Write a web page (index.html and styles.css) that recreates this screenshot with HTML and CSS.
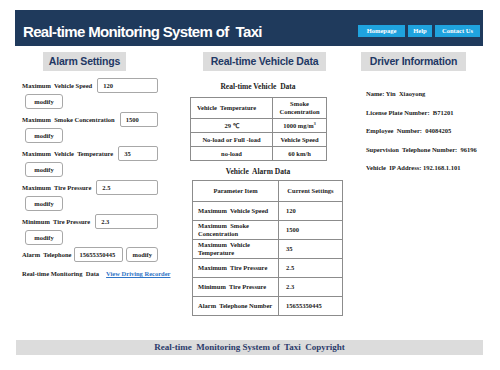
FILE: index.html
```html
<!DOCTYPE html>
<html lang="en">
<head>
<meta charset="utf-8">
<title>Real-time Monitoring System of Taxi</title>
<link rel="stylesheet" href="styles.css">
</head>
<body>
<div class="page">
  <header class="header">
    <h1 class="title">Real-time Monitoring System of&nbsp; Taxi</h1>
    <nav class="nav">
      <a class="nav-btn nav-home" href="#">Homepage</a>
      <a class="nav-btn nav-help" href="#">Help</a>
      <a class="nav-btn nav-contact" href="#">Contact Us</a>
    </nav>
  </header>

  <main class="main">
    <section class="col col-alarm">
      <h2 class="sec-title">Alarm Settings</h2>
      <div class="forms">
        <div class="group">
          <div class="row"><span class="lbl">Maximum&nbsp; Vehicle Speed</span><input class="inp" type="text" value="120"></div>
          <button class="btn">modify</button>
        </div>
        <div class="group">
          <div class="row"><span class="lbl">Maximum&nbsp; Smoke Concentration</span><input class="inp" type="text" value="1500"></div>
          <button class="btn">modify</button>
        </div>
        <div class="group">
          <div class="row"><span class="lbl">Maximum&nbsp; Vehicle&nbsp; Temperature</span><input class="inp" type="text" value="35"></div>
          <button class="btn">modify</button>
        </div>
        <div class="group">
          <div class="row"><span class="lbl">Maximum&nbsp; Tire Pressure</span><input class="inp" type="text" value="2.5"></div>
          <button class="btn">modify</button>
        </div>
        <div class="group">
          <div class="row"><span class="lbl">Minimum&nbsp; Tire Pressure</span><input class="inp" type="text" value="2.3"></div>
          <button class="btn">modify</button>
        </div>
        <div class="row row-phone"><span class="lbl">Alarm&nbsp; Telephone</span><input class="inp inp-phone" type="text" value="15655350445"><button class="btn btn-inline">modify</button></div>
        <div class="row row-link"><span class="lbl">Real-time Monitoring&nbsp; Data</span><a class="link" href="#">View Driving Recorder</a></div>
      </div>
    </section>

    <section class="col col-data">
      <h2 class="sec-title">Real-time Vehicle Data</h2>
      <p class="caption caption-1">Real-time Vehicle&nbsp; Data</p>
      <table class="tbl tbl-1">
        <colgroup><col class="c1a"><col class="c1b"></colgroup>
        <tr class="r-head"><td>Vehicle&nbsp; Temperature</td><td>Smoke<br>Concentration</td></tr>
        <tr><td>29 ℃</td><td>1000 mg/m<sup>3</sup></td></tr>
        <tr><td>No-load or Full -load</td><td>Vehicle Speed</td></tr>
        <tr><td>no-load</td><td>60 km/h</td></tr>
      </table>
      <p class="caption caption-2">Vehicle&nbsp; Alarm Data</p>
      <table class="tbl tbl-2">
        <colgroup><col class="c2a"><col class="c2b"></colgroup>
        <tr class="r-head"><th>Parameter Item</th><th>Current Settings</th></tr>
        <tr><td>Maximum&nbsp; Vehicle Speed</td><td>120</td></tr>
        <tr><td>Maximum&nbsp; Smoke<br>Concentration</td><td>1500</td></tr>
        <tr><td>Maximum&nbsp; Vehicle<br>Temperature</td><td>35</td></tr>
        <tr><td>Maximum&nbsp; Tire Pressure</td><td>2.5</td></tr>
        <tr><td>Minimum&nbsp; Tire Pressure</td><td>2.3</td></tr>
        <tr><td>Alarm&nbsp; Telephone Number</td><td>15655350445</td></tr>
      </table>
    </section>

    <section class="col col-driver">
      <h2 class="sec-title">Driver Information</h2>
      <ul class="info">
        <li>Name: Yin&nbsp; Xiaoyong</li>
        <li>License Plate Number:&nbsp; B71201</li>
        <li>Employee&nbsp; Number:&nbsp; 04084205</li>
        <li>Supervision&nbsp; Telephone Number:&nbsp; 96196</li>
        <li>Vehicle&nbsp; IP Address: 192.168.1.101</li>
      </ul>
    </section>
  </main>

  <footer class="footer">Real-time&nbsp; Monitoring System of&nbsp; Taxi&nbsp; Copyright</footer>
</div>
</body>
</html>
```

FILE: styles.css
```css
* { box-sizing: border-box; }

body {
  margin: 0;
  background: #ffffff;
  font-family: "Liberation Serif", "Times New Roman", serif;
  color: #1b1b1b;
}

.page {
  width: 468px;
  margin-left: 15px;
  padding-top: 10px;
}

/* Header */
.header {
  height: 36px;
  background: #1f3a5c;
  display: flex;
  align-items: center;
  justify-content: space-between;
  padding: 6px 3px 0 8px;
}

.title {
  margin: 0;
  font-family: "Liberation Sans", Arial, sans-serif;
  font-weight: bold;
  font-size: 15px;
  letter-spacing: -0.65px;
  color: #ffffff;
}

.nav {
  display: flex;
  gap: 3px;
}

.nav-btn {
  display: block;
  height: 12px;
  line-height: 12px;
  background: #1fa3de;
  color: #ffffff;
  text-decoration: none;
  text-align: center;
  font-weight: bold;
  font-size: 6.5px;
}

.nav-home { width: 47px; }
.nav-help { width: 24px; }
.nav-contact { width: 45px; }

/* Main columns */
.main {
  display: grid;
  grid-template-columns: 163px 167px 138px;
  margin-top: 6px;
}

.sec-title {
  margin: 0;
  height: 19px;
  line-height: 19px;
  background: #dcdcdc;
  color: #1f3864;
  font-family: "Liberation Sans", Arial, sans-serif;
  font-weight: bold;
  font-size: 10.5px;
  letter-spacing: -0.2px;
  text-align: center;
}

.col-alarm .sec-title { margin-left: 28px; width: 83px; }
.col-data .sec-title { margin-left: 25px; width: 123px; }
.col-driver .sec-title { margin-left: 16px; width: 105px; }

/* Alarm settings form */
.forms {
  margin-top: 7px;
  display: flex;
  flex-direction: column;
}

.group {
  display: flex;
  flex-direction: column;
  gap: 1px;
  margin-bottom: 3px;
}

.row {
  display: flex;
  align-items: center;
  gap: 5px;
  margin-left: 7px;
  width: 136px;
}

.lbl {
  font-weight: bold;
  font-size: 6.5px;
  white-space: nowrap;
}

.inp {
  flex: 1;
  min-width: 0;
  width: 0;
  height: 15px;
  border: 1px solid #a8a8a8;
  border-radius: 2px;
  padding: 0 0 0 5px;
  font-family: "Liberation Serif", serif;
  font-weight: bold;
  font-size: 6.5px;
  color: #1b1b1b;
  background: #ffffff;
  outline: none;
}

.btn {
  width: 38px;
  height: 15px;
  margin-left: 10px;
  padding: 0;
  border: 1px solid #a8a8a8;
  border-radius: 3px;
  background: #ffffff;
  font-family: "Liberation Serif", serif;
  font-weight: bold;
  font-size: 6.5px;
  color: #1b1b1b;
}

.row-phone { gap: 3px; margin-top: -1px; }
.inp-phone { flex: none; width: 49px; padding-left: 4px; }
.btn-inline { width: 33px; margin-left: 0; }

.row-link {
  gap: 7px;
  margin-top: 8px;
}

.link {
  font-weight: bold;
  font-size: 6.5px;
  color: #2f74c6;
  text-decoration: underline;
  white-space: nowrap;
}

/* Vehicle data */
.caption {
  margin: 11px 0 0 12px;
  width: 136px;
  height: 10px;
  line-height: 10px;
  text-align: center;
  font-weight: bold;
  font-size: 7.5px;
}

.caption-2 { margin-top: 6px; }

.tbl {
  border-collapse: collapse;
  table-layout: fixed;
  border: 1px solid #8c8c8c;
  font-size: 6.5px;
  font-weight: bold;
}

.tbl td, .tbl th {
  border: 1px solid #8c8c8c;
  padding: 0 4px;
  line-height: 8px;
}

.tbl sup { font-size: 4px; line-height: 0; }

.tbl-1 {
  margin: 5px 0 0 12px;
  width: 136px;
}

.c1a { width: 82px; }
.c1b { width: 54px; }

.tbl-1 td { height: 14px; text-align: center; }
.tbl-1 .r-head td { height: 21px; }
.tbl-1 .r-head td:first-child { text-align: left; padding-left: 6px; }

.tbl-2 {
  margin: 3px 0 0 14px;
  width: 150px;
}

.c2a { width: 86px; }
.c2b { width: 64px; }

.tbl-2 th { height: 21px; text-align: center; font-weight: bold; }
.tbl-2 td { height: 19px; text-align: left; padding-left: 5px; }
.tbl-2 td:last-child { padding-left: 7px; }

/* Driver info */
.info {
  list-style: none;
  margin: 0;
  padding: 14px 0 0 21px;
  font-weight: bold;
  font-size: 6.5px;
  line-height: 18.5px;
  white-space: nowrap;
}

/* Footer */
.footer {
  margin-top: 24px;
  margin-left: 1px;
  height: 15px;
  line-height: 15px;
  background: #dcdcdc;
  color: #2b3a6a;
  text-align: center;
  font-weight: bold;
  font-size: 9px;
}
```
